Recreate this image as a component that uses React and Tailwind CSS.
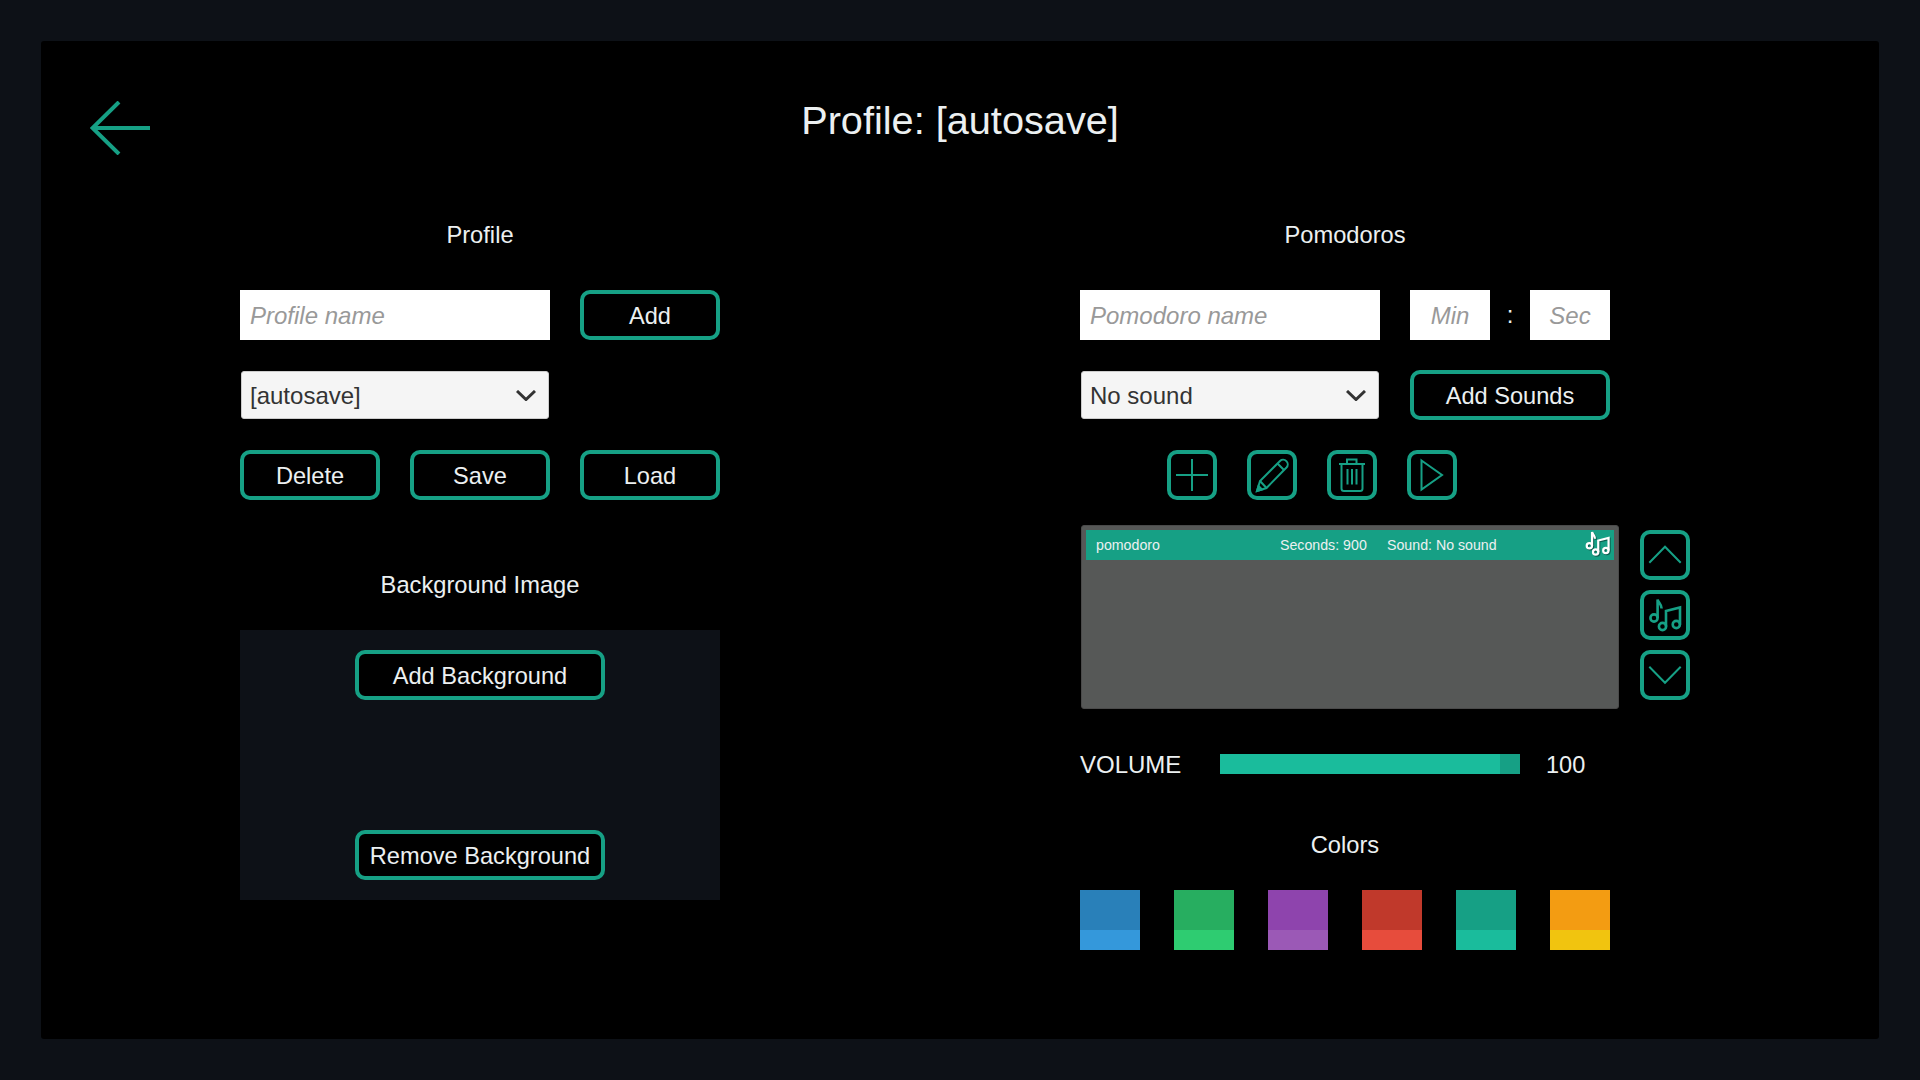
import React from 'react';

const btn = 'flex items-center justify-center pt-[4px] border-4 border-[#16a085] rounded-[10px] bg-black text-[23.6px] text-[#ecf0f1]';
const field = 'h-[50px] pt-[2px] bg-white text-[24px] italic text-[#333] placeholder:text-[#999] outline-none';
const iconBtn = 'flex items-center justify-center w-[50px] h-[50px] border-4 border-[#16a085] rounded-[10px] bg-black';

// all icons are drawn on the 50x50 box of the button, viewBox crops off the border
const Icon = ({ children, className = 'w-[42px] h-[42px]', color = '#16a085', width = 2 }) => (
  <svg viewBox="4 4 42 42" fill="none" stroke={color} strokeWidth={width} className={className}>
    {children}
  </svg>
);

const Notes = () => (
  <>
    <circle cx="14" cy="28" r="3.6" />
    <path d="M17.6 28V9.5c.6 3 4 4.500 4 9" />
    <circle cx="22.500" cy="36.500" r="3.600" />
    <circle cx="36.300" cy="34.500" r="3.600" />
    <path d="M26 36.500V21l14-3.500V34.500" />
  </>
);

const Chevron = () => (
  <svg viewBox="0 0 20 10" fill="none" stroke="#333" strokeWidth="3" className="absolute right-[13px] top-[19px] w-[20px] h-[11px] pointer-events-none">
    <path d="M1 0.500l9 8.500l9-8.500" />
  </svg>
);

const Select = ({ value }) => (
  <div className="relative m-px w-[calc(100%-2px)] h-[48px]">
    <select defaultValue={value} className="appearance-none w-full h-full pl-[8px] pt-[2px] bg-[#f5f5f5] border border-[#ccc] rounded-[3px] text-[24px] text-[#333] outline-none">
      <option>{value}</option>
    </select>
    <Chevron />
  </div>
);

const Heading = ({ children, className = '' }) => (
  <h2 className={`h-10 pt-[2px] flex items-center justify-center text-[23.7px] text-[#ecf0f1] ${className}`}>{children}</h2>
);

const swatches = [
  ['bg-[#2980b9]', 'bg-[#3498db]'],
  ['bg-[#27ae60]', 'bg-[#2ecc71]'],
  ['bg-[#8e44ad]', 'bg-[#9b59b6]'],
  ['bg-[#c0392b]', 'bg-[#e74c3c]'],
  ['bg-[#16a085]', 'bg-[#1abc9c]'],
  ['bg-[#f39c12]', 'bg-[#f1c40f]'],
];

const App = () => {
  return (
    <div className="w-[1920px] h-[1080px] p-[41px] bg-[#0d1117] font-['Liberation_Sans',Arial,sans-serif] overflow-hidden">
      <div className="w-full h-full bg-black rounded-[3px]">
        {/* Header */}
        <div className="relative h-[174px] flex justify-center pt-[54px]">
          <svg viewBox="0 0 60 54" fill="none" stroke="#16a085" strokeWidth="4" className="absolute left-[49px] top-[60px] w-[60px] h-[54px]">
            <path d="M29 1L2.500 27L29 53M2.500 27H60" />
          </svg>
          <h1 className="h-[50px] pt-[2px] flex items-center text-[39.7px] text-[#ecf0f1]">Profile: [autosave]</h1>
        </div>

        <div className="flex pl-[199px]">
          {/* Left Column */}
          <div className="w-[480px] flex flex-col">
            <Heading>Profile</Heading>
            <div className="mt-[35px] grid grid-cols-[310px_140px] gap-x-[30px] gap-y-[30px]">
              <input placeholder="Profile name" className={`${field} w-full px-[10px]`} />
              <button className={btn}>Add</button>
              <Select value="[autosave]" />
            </div>
            <div className="mt-[30px] grid grid-cols-3 gap-[30px]">
              <button className={`${btn} h-[50px]`}>Delete</button>
              <button className={`${btn} h-[50px]`}>Save</button>
              <button className={`${btn} h-[50px]`}>Load</button>
            </div>
            <Heading className="mt-[65px]">Background Image</Heading>
            <div className="mt-[25px] h-[270px] py-[20px] flex flex-col items-center justify-between bg-[#0d1117]">
              <button className={`${btn} w-[250px] h-[50px]`}>Add Background</button>
              <button className={`${btn} w-[250px] h-[50px]`}>Remove Background</button>
            </div>
          </div>

          {/* Right Column */}
          <div className="ml-[360px] flex flex-col">
            <Heading className="w-[530px]">Pomodoros</Heading>
            <div className="mt-[35px] w-[530px] flex items-center">
              <input placeholder="Pomodoro name" className={`${field} w-[300px] px-[10px]`} />
              <input placeholder="Min" className={`${field} ml-[30px] w-[80px] text-center`} />
              <span className="w-[40px] text-center text-[24px] text-[#ecf0f1]">:</span>
              <input placeholder="Sec" className={`${field} w-[80px] text-center`} />
            </div>
            <div className="mt-[30px] w-[530px] flex items-center">
              <div className="w-[300px]"><Select value="No sound" /></div>
              <button className={`${btn} ml-[30px] w-[200px] h-[50px]`}>Add Sounds</button>
            </div>
            <div className="mt-[30px] ml-[87px] flex gap-[30px]">
              <button className={iconBtn}><Icon><path d="M9 25H41M25 9V41" /></Icon></button>
              <button className={iconBtn}>
                <Icon>
                  <path d="M10 41L13 31L33 11A4.600 4.600 0 0 1 39.500 17.500L19.500 38Z" />
                  <path d="M13 31L19.500 38M30.500 13.500L37 20" />
                  <path d="M10 41L11.500 36L15 39.500Z" fill="#16a085" />
                </Icon>
              </button>
              <button className={iconBtn}>
                <Icon>
                  <path d="M12 14H38M20 14V9.500H29.500V14M14.500 14V38.500Q14.500 41 17 41H33Q35.500 41 35.500 38.500V14M20.500 19V34.500M25 19V34.500M29.500 19V34.500" />
                </Icon>
              </button>
              <button className={iconBtn}><Icon><path d="M14.500 10.500L35 25L14.500 39.500Z" /></Icon></button>
            </div>

            {/* Pomodoro list */}
            <div className="mt-[25px] flex items-start">
              <div className="ml-px w-[538px] h-[184px] p-[4px] bg-[#565857] border border-[#4a4a4a] rounded-[3px]">
                <div className="relative h-[30px] pt-[2px] flex items-center pl-[10px] bg-[#16a085] text-[14.2px] text-[#ecf0f1]">
                  <span className="w-[184px]">pomodoro</span>
                  <span className="w-[107px]">Seconds: 900</span>
                  <span>Sound: No sound</span>
                  <Icon className="absolute right-[1px] top-[-2px] w-[31px] h-[31px] drop-shadow-[1px_1px_0_#0b5d4d]" color="#fff" width={3}><Notes /></Icon>
                </div>
              </div>
              <div className="ml-[21px] mt-[5px] flex flex-col gap-[10px]">
                <button className={iconBtn}><Icon><path d="M9.300 32.700L25 16.700L40.700 32.700" /></Icon></button>
                <button className={iconBtn}><Icon width={2.6}><Notes /></Icon></button>
                <button className={iconBtn}><Icon><path d="M9.300 16.700L25 32.700L40.700 16.700" /></Icon></button>
              </div>
            </div>

            {/* Volume */}
            <div className="mt-[35px] h-10 flex items-center text-[24px] text-[#ecf0f1]">
              <span className="w-[140px] pt-[2px]">VOLUME</span>
              <div className="w-[300px] h-[20px] bg-[#16a085]">
                <div className="w-[280px] h-full bg-[#1abc9c]" />
              </div>
              <span className="ml-[26px] pt-[4px] text-[23.5px]">100</span>
            </div>

            <Heading className="mt-[41px] w-[530px]">Colors</Heading>
            <div className="mt-[25px] w-[530px] flex justify-between">
              {swatches.map(([top, bottom]) => (
                <div key={top} className="w-[60px] h-[60px] flex flex-col">
                  <div className={`h-[40px] ${top}`} />
                  <div className={`h-[20px] ${bottom}`} />
                </div>
              ))}
            </div>
          </div>
        </div>
      </div>
    </div>
  );
};

export default App;
